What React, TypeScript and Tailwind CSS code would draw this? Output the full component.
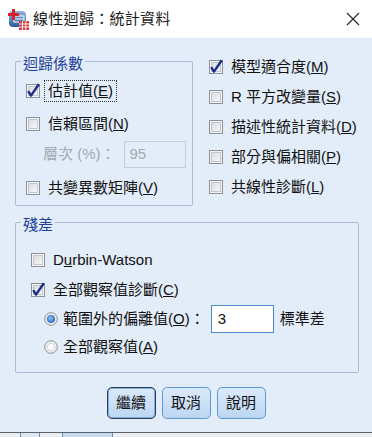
import React, { useId } from 'react';

function CheckBox({ checked = false }: { checked?: boolean }) {
  const id = useId();
  return (
    <svg width="14" height="14" viewBox="0 0 14 14" className="shrink-0 overflow-visible">
      <defs>
        <linearGradient id={`${id}g`} x1="0" y1="0" x2="1" y2="1">
          <stop offset="0" stopColor="#d9dbdf" />
          <stop offset="1" stopColor="#f7f8f9" />
        </linearGradient>
      </defs>
      <rect x="0.5" y="0.5" width="13" height="13" fill="#f4f5f6" stroke="#8d9198" />
      <rect x="2.5" y="2.5" width="9" height="9" fill={`url(#${id}g)`} stroke="#c3c7cc" />
      {checked && (
        <path d="M2.2 7.2 L5 11.6 L12.8 0.2" stroke="#1c2a8c" strokeWidth="2.4" fill="none" strokeLinejoin="round" />
      )}
    </svg>
  );
}

function Radio({ checked = false }: { checked?: boolean }) {
  const id = useId();
  return (
    <svg width="14" height="14" viewBox="0 0 14 14" className="shrink-0">
      <defs>
        <radialGradient id={`${id}r`} cx="0.4" cy="0.35" r="0.7">
          <stop offset="0" stopColor="#8ec2f5" />
          <stop offset="1" stopColor="#2a6fc9" />
        </radialGradient>
      </defs>
      <circle cx="7" cy="7" r="6.3" fill="#eef0f2" stroke="#8c9096" strokeWidth="1" />
      {checked ? (
        <circle cx="7" cy="7" r="3.8" fill={`url(#${id}r)`} stroke="#2d62a8" strokeWidth="0.6" />
      ) : (
        <circle cx="7" cy="7" r="3.8" fill="#fbfbfc" stroke="#c8ccd1" strokeWidth="0.8" />
      )}
    </svg>
  );
}

function Label({ children, focused = false }: { children: React.ReactNode; focused?: boolean }) {
  return (
    <span
      className={`ml-[4px] px-[3px] leading-[20px] whitespace-nowrap border border-dotted ${
        focused ? 'border-[#333]' : 'border-transparent'
      }`}
    >
      {children}
    </span>
  );
}

function AppIcon() {
  return (
    <svg width="21" height="21" viewBox="0 0 21 21">
      <defs>
        <linearGradient id="appbg" x1="0" y1="0" x2="0" y2="1">
          <stop offset="0" stopColor="#8fb4de" />
          <stop offset="1" stopColor="#2d5c9c" />
        </linearGradient>
      </defs>
      <rect x="1" y="2" width="17" height="16" rx="4" fill="url(#appbg)" />
      <rect x="6" y="7" width="10" height="6" fill="none" stroke="#ffffff" strokeWidth="1" />
      <line x1="6" y1="10" x2="16" y2="10" stroke="#ffffff" strokeWidth="1" />
      <rect x="4" y="0" width="3" height="11" fill="#d7232b" />
      <rect x="0" y="4" width="11" height="3" fill="#d7232b" />
      <rect x="11" y="12" width="10" height="9" fill="#d63a3f" />
      <path d="M11 15 H21 M11 18 H21 M14.5 12 V21 M17.8 12 V21" stroke="#ffffff" strokeWidth="0.9" />
    </svg>
  );
}

function Btn({ children, primary = false }: { children: React.ReactNode; primary?: boolean }) {
  return (
    <button
      className={`w-[49px] h-[32px] rounded-[5px] text-[15px] bg-linear-to-b from-[#dbeafa] to-[#bcd6f2] ${
        primary
          ? 'border border-[#2f3b49] shadow-[inset_0_0_0_1px_#7db1e6]'
          : 'border border-[#5b98d6]'
      }`}
    >
      {children}
    </button>
  );
}

export default function App() {
  return (
    <div className="w-[372px] h-[437px] flex flex-col overflow-hidden bg-white text-[15px] text-[#111] font-['Liberation_Sans','Noto_Sans_CJK_TC',sans-serif]">
      {/* title bar */}
      <div className="h-[38px] shrink-0 flex items-center pl-[8px] pr-[12px] bg-white">
        <AppIcon />
        <span className="ml-[4px] text-[15px] tracking-[0.3px] text-[#1a1a1a]">線性迴歸：統計資料</span>
        <svg width="14" height="14" viewBox="0 0 14 14" className="ml-auto">
          <path d="M1 1 L13 13 M13 1 L1 13" stroke="#222" strokeWidth="1.1" />
        </svg>
      </div>

      {/* body */}
      <div className="flex-1 bg-[#e3edf9] pl-[15px] pr-[13px]">
        <div className="flex items-start mt-[12px]">
          <fieldset className="w-[178px] shrink-0 border border-[#a6bcd7] rounded-[2px] pl-[5px] pb-[5px]">
            <legend className="px-[2px] pt-[6px] leading-[16px] text-[#213f97]">迴歸係數</legend>
            <div className="pl-[5px] flex flex-col">
              <div className="mt-[7px] h-[24px] flex items-center">
                <CheckBox checked />
                <Label focused>
                  估計值(<u>E</u>)
                </Label>
              </div>
              <div className="mt-[9px] h-[24px] flex items-center">
                <CheckBox />
                <Label>
                  信賴區間(<u>N</u>)
                </Label>
              </div>
              <div className="mt-[5px] h-[27px] flex items-center">
                <span className="ml-[17px] text-[#a1a9b4] whitespace-nowrap">層次 (%)：</span>
                <div className="ml-[8px] w-[62px] h-[27px] border border-[#c4ccd6] flex items-center pl-[5px] text-[#a1a9b4]">
                  95
                </div>
              </div>
              <div className="mt-[8px] h-[24px] flex items-center">
                <CheckBox />
                <Label>
                  共變異數矩陣(<u>V</u>)
                </Label>
              </div>
            </div>
          </fieldset>

          <div className="ml-[16px] mt-[2px] flex flex-col">
            {[
              { t: '模型適合度', k: 'M', c: true },
              { t: 'R 平方改變量', k: 'S', c: false },
              { t: '描述性統計資料', k: 'D', c: false },
              { t: '部分與偏相關', k: 'P', c: false },
              { t: '共線性診斷', k: 'L', c: false },
            ].map((r) => (
              <div key={r.k} className="h-[30px] flex items-center">
                <CheckBox checked={r.c} />
                <Label>
                  {r.t}(<u>{r.k}</u>)
                </Label>
              </div>
            ))}
          </div>
        </div>

        <fieldset className="mt-[5px] border border-[#a6bcd7] rounded-[2px] pl-[5px] pb-[13px]">
          <legend className="px-[2px] pt-[6px] leading-[16px] text-[#213f97]">殘差</legend>
          <div className="pl-[10px] flex flex-col">
            <div className="mt-[15px] h-[24px] flex items-center">
              <CheckBox />
              <Label>
                D<u>u</u>rbin-Watson
              </Label>
            </div>
            <div className="mt-[6px] h-[24px] flex items-center">
              <CheckBox checked />
              <Label>
                全部觀察值診斷(<u>C</u>)
              </Label>
            </div>
            <div className="mt-[3px] h-[28px] flex items-center">
              <div className="ml-[13px] flex items-center">
                <Radio checked />
                <span className="ml-[5px] whitespace-nowrap">
                  範圍外的偏離值(<u>O</u>)：
                </span>
              </div>
              <div className="ml-[6px] w-[63px] h-[28px] border border-[#4d8bcb] bg-white flex items-center pl-[6px]">
                3
              </div>
              <span className="ml-[6px]">標準差</span>
            </div>
            <div className="mt-[2px] h-[24px] flex items-center">
              <div className="ml-[13px] flex items-center">
                <Radio />
                <span className="ml-[5px]">
                  全部觀察值(<u>A</u>)
                </span>
              </div>
            </div>
          </div>
        </fieldset>

        <div className="mt-[14px] flex justify-center gap-[6px] pr-[2px]">
          <Btn primary>繼續</Btn>
          <Btn>取消</Btn>
          <Btn>說明</Btn>
        </div>
      </div>

      {/* window behind */}
      <div className="h-[5px] shrink-0 border-t border-[#59636f] bg-[#eceef1] flex">
        <div className="ml-[20px] w-[20px] border-x border-[#6f8fb3] bg-[#dfe7f1]" />
        <div className="ml-[22px] w-[51px] border-x border-[#6f8fb3] bg-[#c9d9ec]" />
      </div>
    </div>
  );
}
